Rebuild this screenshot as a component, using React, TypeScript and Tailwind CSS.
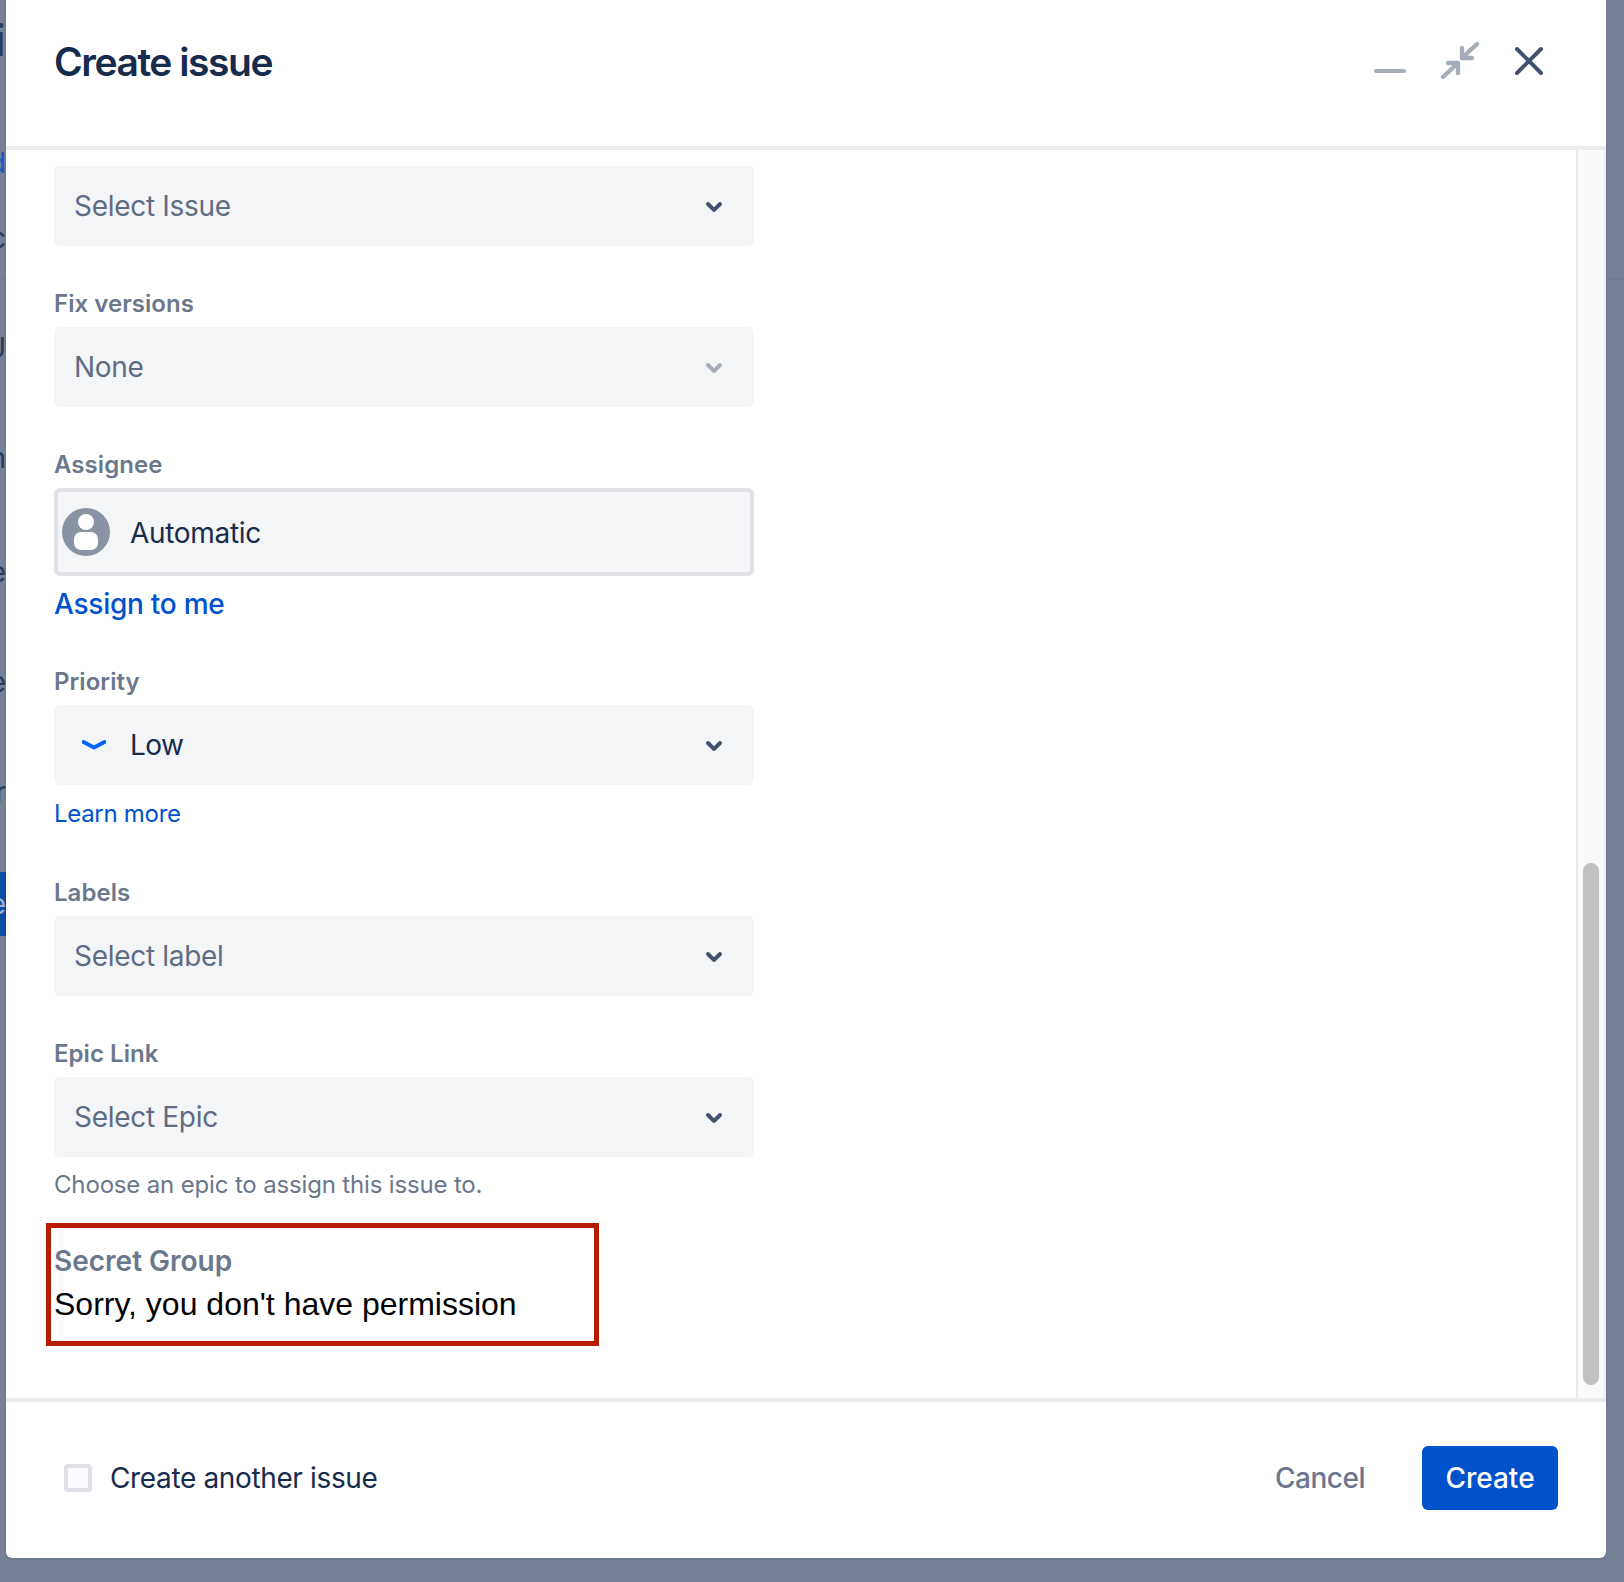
const inter = "font-['Inter',sans-serif]"

function Chevron({ muted }: { muted?: boolean }) {
  return (
    <svg viewBox="0 0 24 24" className="h-12 w-12 shrink-0" fill={muted ? '#a5adba' : '#42526e'}>
      <path d="M8.292 10.293a1.009 1.009 0 000 1.419l2.939 2.965c.218.215.5.322.779.322s.556-.107.769-.322l2.93-2.955a1.01 1.01 0 000-1.419.987.987 0 00-1.406 0l-2.298 2.317-2.307-2.327a.99.99 0 00-1.406 0z" />
    </svg>
  )
}

function Select({ value, muted, dark, icon }: { value: string; muted?: boolean; dark?: boolean; icon?: React.ReactNode }) {
  return (
    <div className="flex h-20 w-[700px] items-center rounded-md bg-[#f4f5f7] pl-5 pr-4">
      {icon}
      <span className={`flex-1 text-[28px] leading-10 ${dark ? 'tracking-[-0.6px] text-[#172b4d]' : 'tracking-[-0.3px] text-[#5e6c84]'}`}>{value}</span>
      <Chevron muted={muted} />
    </div>
  )
}

function Label({ children, className }: { children: string; className?: string }) {
  return <div className={`h-8 pt-px text-[24px] font-semibold leading-8 tracking-[0.05px] text-[#6b778c] ${className ?? ''}`}>{children}</div>
}

const peeks = [
  { text: 'i', top: 'top-[20px]', color: 'text-[#172b4d]', size: 'text-[44px]' },
  { text: 'd', top: 'top-[143px]', color: 'text-[#0052cc]', size: 'text-[28px]' },
  { text: 'c', top: 'top-[218px]', color: 'text-[#172b4d]', size: 'text-[28px]' },
  { text: 'U', top: 'top-[328px]', color: 'text-[#172b4d]', size: 'text-[28px]' },
  { text: 'n', top: 'top-[438px]', color: 'text-[#172b4d]', size: 'text-[28px]' },
  { text: 'e', top: 'top-[552px]', color: 'text-[#172b4d]', size: 'text-[28px]' },
  { text: 'e', top: 'top-[662px]', color: 'text-[#172b4d]', size: 'text-[28px]' },
  { text: 'r', top: 'top-[772px]', color: 'text-[#172b4d]', size: 'text-[28px]' },
]

export default function App() {
  return (
    <div className={`relative h-[1582px] w-[1624px] overflow-hidden bg-[#768196] ${inter}`}>
      {/* page behind the overlay, only a sliver of it shows */}
      {peeks.map((p) => (
        <span key={p.top} className={`absolute right-[1618px] leading-10 opacity-80 ${p.size} ${p.top} ${p.color}`}>
          {p.text}
        </span>
      ))}
      <div className="absolute left-0 top-[872px] flex h-16 w-1.5 items-center justify-end overflow-hidden bg-[#0e4ba6]">
        <span className="shrink-0 text-[28px] text-[#9fb0cf]">e</span>
      </div>
      <div className="absolute left-0 top-[278px] h-0.5 w-1.5 bg-[#727c93]" />
      <div className="absolute right-0 top-[278px] h-0.5 w-[18px] bg-[#727c93]" />

      <div className="absolute left-1.5 top-0 flex h-[1558px] w-[1600px] flex-col rounded-b-md bg-white shadow-sm">
        <header className="flex h-[150px] shrink-0 items-start justify-between border-b-4 border-[#ebecf0] pl-12 pr-[61px]">
          <h1 className="mt-[37px] text-[39px] font-semibold leading-[50px] tracking-[-1.45px] text-[#172b4d]">Create issue</h1>
          <svg viewBox="0 0 172 36" className="mt-10 h-9 w-[172px] overflow-visible" fill="none" strokeLinecap="round" strokeLinejoin="round" strokeWidth="4">
            <path d="M3 31h28" stroke="#a5adba" />
            <path d="M104 4 89 18M89 8v10h10M70 37l15-14M85 33v-10h-10" stroke="#a5adba" strokeWidth="4.4" />
            <path d="m144 9 24 24M168 9l-24 24" stroke="#42526e" />
          </svg>
        </header>

        <div className="flex min-h-0 flex-1">
          <main className="flex-1 pl-12 pt-4">
            <Select value="Select Issue" />
            <Label className="mt-[41px] mb-2">Fix versions</Label>
            <Select value="None" muted />
            <Label className="mt-[41px] mb-2">Assignee</Label>
            <div className="flex h-[88px] w-[700px] items-center gap-5 rounded-md border-4 border-[#dfe1e6] bg-[#f4f5f7] pl-[4px]">
              <svg viewBox="0 0 48 48" className="h-12 w-12 shrink-0">
                <circle cx="24" cy="24" r="24" fill="#8993a4" />
                <circle cx="24" cy="14" r="8" fill="#fff" />
                <rect x="12" y="24" width="24" height="18" rx="7" fill="#fff" />
              </svg>
              <span className="pt-0.5 text-[28px] leading-10 tracking-[-0.3px] text-[#172b4d]">Automatic</span>
            </div>
            <a className="mt-2 block text-[28px] font-medium leading-10 tracking-[-0.25px] text-[#0052cc]">Assign to me</a>
            <Label className="mt-[41px] mb-2">Priority</Label>
            <Select
              value="Low"
              dark
              icon={
                <svg viewBox="0 0 24 12" className="ml-2 mr-6 h-3 w-6 shrink-0" fill="none">
                  <path d="M1.5 3 12 8.5 22.5 3" stroke="#0065ff" strokeWidth="3.8" strokeLinecap="round" strokeLinejoin="round" />
                </svg>
              }
            />
            <a className="mt-2 block pt-px text-[24px] leading-10 tracking-[-0.3px] text-[#0052cc]">Learn more</a>
            <Label className="mt-[42px] mb-2">Labels</Label>
            <Select value="Select label" />
            <Label className="mt-[41px] mb-2">Epic Link</Label>
            <Select value="Select Epic" />
            <p className="mt-2 text-[24px] leading-10 tracking-[-0.16px] text-[#6b778c]">Choose an epic to assign this issue to.</p>
            <div className="-ml-2 mt-[18px] h-[123px] w-[553px] border-[5px] border-[#b71c00] pl-[3px] pt-[15px]">
              <div className="text-[28px] font-semibold leading-9 text-[#6b778c]">Secret Group</div>
              <div className="mt-[5px] font-['Liberation_Sans',sans-serif] text-[32px] leading-10 text-black">Sorry, you don't have permission</div>
            </div>
          </main>
          <div className="flex w-[30px] shrink-0 items-end justify-center border-l-2 border-r-2 border-l-[#e8e8e8] border-r-[#efefef] bg-[#fafafa] pb-[13px]">
            <div className="h-[522px] w-4 rounded-full bg-[#c1c1c1]" />
          </div>
        </div>

        <footer className="flex h-[160px] shrink-0 items-center border-t-4 border-[#ebecf0] pb-1 pl-[58px] pr-12">
          <div className="h-7 w-7 rounded border-4 border-[#dfe1e6] bg-[#fafbfc]" />
          <span className="ml-[18px] flex-1 text-[28px] leading-10 tracking-[-0.36px] text-[#172b4d]">Create another issue</span>
          <button className="mr-[57px] text-[28px] font-medium leading-10 tracking-[-0.5px] text-[#6b778c]">Cancel</button>
          <button className="h-16 w-[136px] rounded-md bg-[#0052cc] text-[28px] font-medium text-white">Create</button>
        </footer>
      </div>
    </div>
  )
}
